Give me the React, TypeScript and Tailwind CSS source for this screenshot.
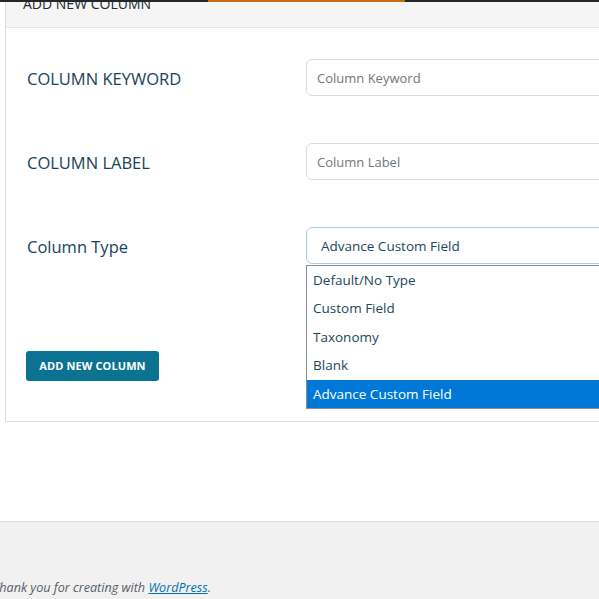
import { useState } from "react";

const FONT = "font-['Segoe_UI','Open_Sans','Noto_Sans',sans-serif]";

const OPTIONS = ["Default/No Type", "Custom Field", "Taxonomy", "Blank", "Advance Custom Field"];

const FieldRow = ({ label, placeholder }: { label: string; placeholder: string }) => (
  <div className="flex items-center h-[37px]">
    <label className="w-[279px] shrink-0 pt-[4px] text-[16.5px] font-medium text-[#17435a]">{label}</label>
    <input
      placeholder={placeholder}
      className="h-[37px] flex-1 min-w-[400px] rounded-[6px] border border-[#dcdcde] bg-white px-[10px] pt-[1px] text-[13px] text-[#32373c] placeholder:text-[#72777c] outline-none"
    />
  </div>
);

export default function App() {
  const [type] = useState("Advance Custom Field");

  return (
    <div className={`${FONT} min-h-[599px] w-[599px] overflow-hidden bg-white flex flex-col`}>
      {/* admin tab strip, only its bottom edge shows */}
      <div className="flex h-[2px] shrink-0">
        <div className="w-[208px] bg-[#23282d]" />
        <div className="w-[197px] bg-[#c06e10]" />
        <div className="flex-1 bg-[#23282d]" />
      </div>

      <div className="pl-[5px]">
        <div className="border-l border-b border-[#dcdcde] w-[700px]">
          <div className="h-[26px] bg-[#f5f5f5] border-b border-[#e6e6e6] pl-[17px] overflow-hidden">
            <h3 className="-mt-[8px] text-[14px] leading-[20px] text-[#23282d]">ADD NEW COLUMN</h3>
          </div>

          <div className="pl-[21px] pt-[31px] pb-[40px] flex flex-col">
            <FieldRow label="COLUMN KEYWORD" placeholder="Column Keyword" />
            <div className="h-[47px]" />
            <FieldRow label="COLUMN LABEL" placeholder="Column Label" />
            <div className="h-[47px]" />
            <div className="flex items-center h-[37px]">
              <label className="w-[279px] shrink-0 pt-[4px] text-[16.5px] font-medium text-[#17435a]">Column Type</label>
              <div className="relative flex-1">
                <div className="h-[37px] rounded-[6px] border border-[#a9cfdc] bg-white pl-[14px] pt-[1px] flex items-center text-[13.5px] text-[#1b4759]">
                  {type}
                </div>
                <ul className="absolute left-0 top-[38px] w-[400px] border border-[#8c8f94] bg-white z-10">
                  {OPTIONS.map((o) => (
                    <li
                      key={o}
                      className={`h-[28.4px] flex items-center pl-[6px] text-[13.5px] ${
                        o === type ? "bg-[#0078d7] text-white" : "text-[#1b4759]"
                      }`}
                    >
                      {o}
                    </li>
                  ))}
                </ul>
              </div>
            </div>
            <div className="h-[87px]" />
            <div>
              <button className="h-[30px] w-[133px] -ml-[1px] rounded-[3px] bg-[#0b7391] text-white text-[11px] font-bold tracking-[0.1px]">
                ADD NEW COLUMN
              </button>
            </div>
          </div>
        </div>
      </div>

      <div className="h-[99px] shrink-0" />

      <footer className="flex-1 border-t border-[#dcdcde] bg-[#f1f1f1] pt-[57px] -ml-[7px]">
        <p className="text-[12.6px] italic text-[#555d66]">
          Thank you for creating with{" "}
          <a href="#" className="text-[#0073aa] underline">
            WordPress
          </a>
          .
        </p>
      </footer>
    </div>
  );
}
